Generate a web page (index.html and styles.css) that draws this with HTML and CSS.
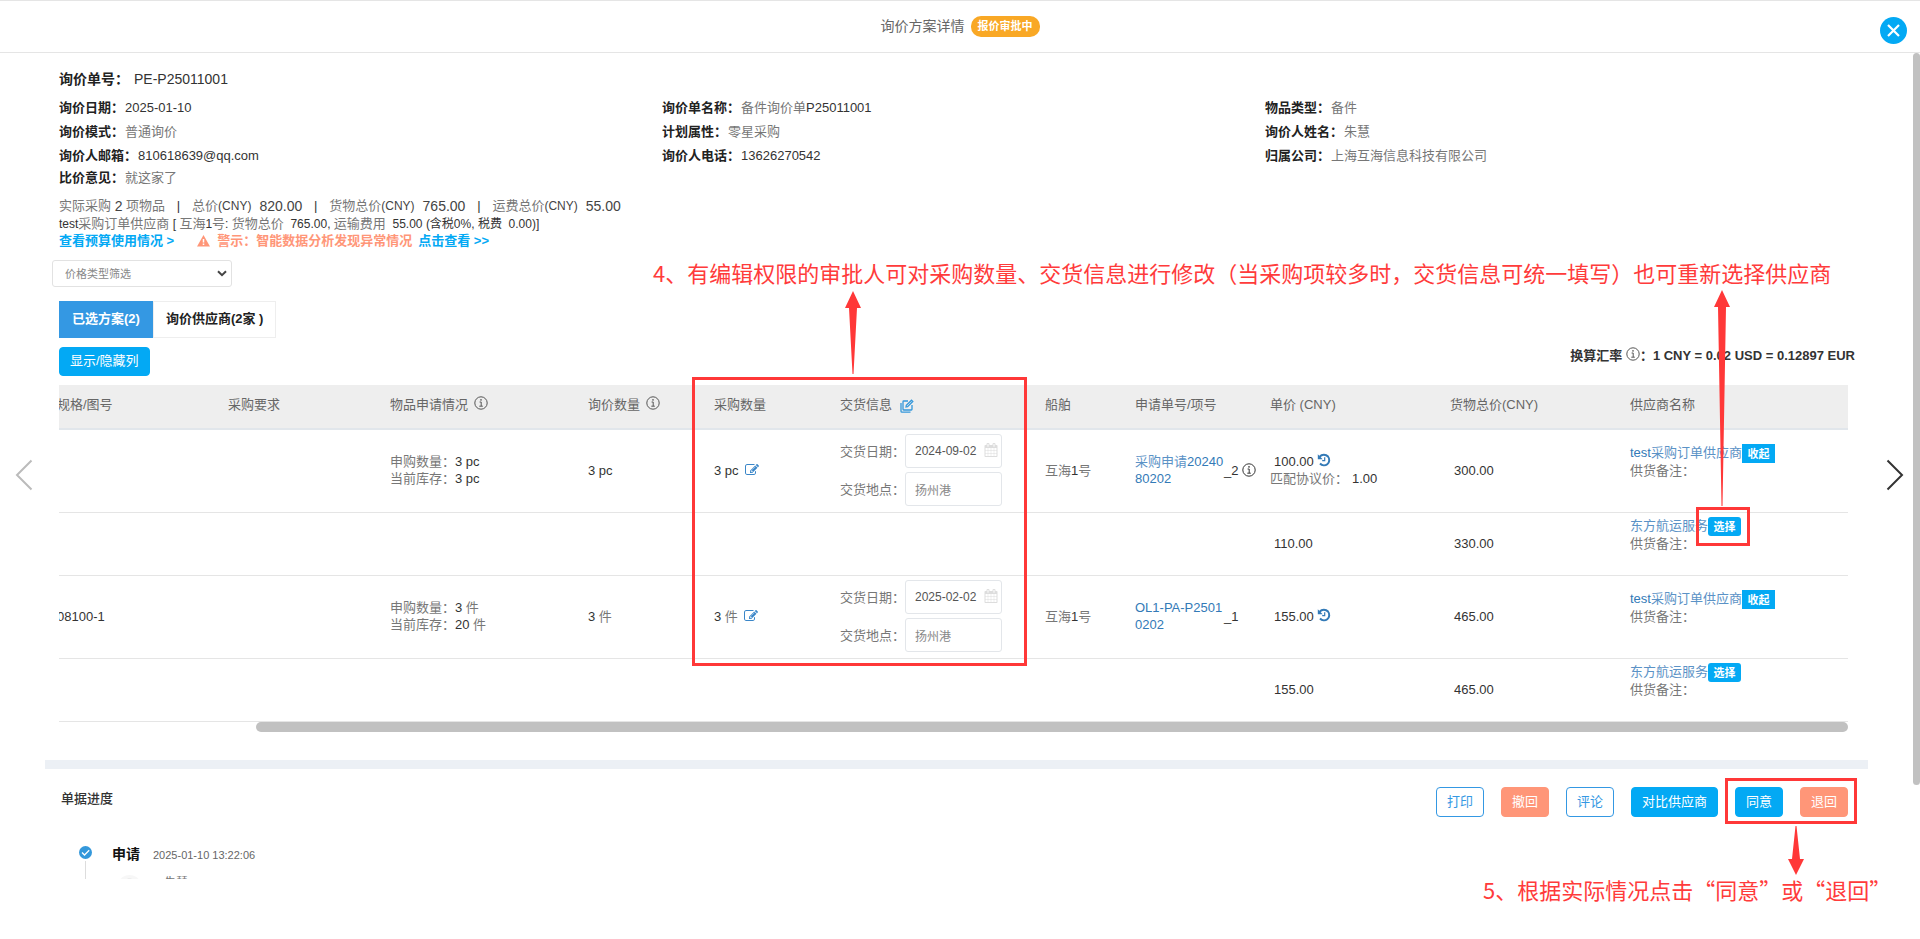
FILE: index.html
```html
<!DOCTYPE html>
<html lang="zh-CN">
<head>
<meta charset="utf-8">
<title>询价方案详情</title>
<link rel="stylesheet" href="styles.css">
</head>
<body>
<svg class="sprite" aria-hidden="true">
  <symbol id="i-info" viewBox="0 0 14 14"><g fill="none" stroke="currentColor"><circle cx="7" cy="7" r="6.2"/><path d="M5.6 6H7.2V10M5.3 10.2H8.8" stroke-width="1"/></g><circle cx="7" cy="3.9" r=".8" fill="currentColor"/></symbol>
  <symbol id="i-edit" viewBox="0 0 1792 1792"><path fill="currentColor" d="M888 1184l116-116-152-152-116 116v56h96v96h56zm440-720q-16-16-33 1l-350 350q-17 17-1 33t33-1l350-350q17-17 1-33zm80 594v190q0 119-84.5 203.5t-203.5 84.5h-832q-119 0-203.5-84.5t-84.5-203.5v-832q0-119 84.5-203.5t203.5-84.5h832q63 0 117 25 15 7 18 23 3 17-9 29l-49 49q-14 14-32 8-23-6-45-6h-832q-66 0-113 47t-47 113v832q0 66 47 113t113 47h832q66 0 113-47t47-113v-126q0-13 9-22l64-64q15-15 35-7t20 29zm-96-738l288 288-672 672h-288v-288zm444 132l-92 92-288-288 92-92q28-28 68-28t68 28l152 152q28 28 28 68t-28 68z"/></symbol>
  <symbol id="i-cal" viewBox="0 0 1792 1792"><path fill="currentColor" d="M192 1664h288v-288h-288v288zm352 0h320v-288h-320v288zm-352-352h288v-320h-288v320zm352 0h320v-320h-320v320zm-352-384h288v-288h-288v288zm736 736h320v-288h-320v288zm-384-736h320v-288h-320v288zm768 736h288v-288h-288v288zm-384-352h320v-320h-320v320zm-352-864v-288q0-13-9.5-22.5t-22.5-9.5h-64q-13 0-22.5 9.5t-9.5 22.5v288q0 13 9.5 22.5t22.5 9.5h64q13 0 22.5-9.5t9.5-22.5zm736 864h288v-320h-288v320zm-384-384h320v-288h-320v288zm384 0h288v-288h-288v288zm32-480v-288q0-13-9.5-22.5t-22.5-9.5h-64q-13 0-22.5 9.5t-9.5 22.5v288q0 13 9.5 22.5t22.5 9.5h64q13 0 22.5-9.5t9.5-22.5zm384-64v1280q0 52-38 90t-90 38h-1408q-52 0-90-38t-38-90v-1280q0-52 38-90t90-38h128v-96q0-66 47-113t113-47h64q66 0 113 47t47 113v96h384v-96q0-66 47-113t113-47h64q66 0 113 47t47 113v96h128q52 0 90 38t38 90z"/></symbol>
  <symbol id="i-history" viewBox="0 0 14 14"><path fill="none" stroke="currentColor" stroke-width="2" d="M2.500 3.800C5 .8 9 1.200 11 3.500C13 6 12.500 9.500 10.300 11.200C8.200 12.800 5 12.600 3 10.500"/><path fill="currentColor" d="M.8 1.300V6.200H5.700z"/><path fill="none" stroke="currentColor" stroke-width="1.200" d="M7.700 4.200V7.600H5.200"/></symbol>
</svg>

<div class="modal">
  <header class="modal-head">
    <h1 class="modal-title">询价方案详情</h1>
    <span class="badge">报价审批中</span>
    <button class="close" type="button" aria-label="关闭"><svg width="13" height="13" viewBox="0 0 13 13"><path d="M1 1L12 12M12 1L1 12" stroke="#fff" stroke-width="2.200"/></svg></button>
  </header>

  <main class="modal-body">
    <section class="content">
      <p class="number-line"><b>询价单号：</b><span class="dark">PE-P25011001</span></p>
      <div class="info-grid">
        <p><b>询价日期：</b><span class="dark">2025-01-10</span></p>
        <p><b>询价单名称：</b><span>备件询价单<i class="dark">P25011001</i></span></p>
        <p><b>物品类型：</b><span>备件</span></p>
        <p><b>询价模式：</b><span>普通询价</span></p>
        <p><b>计划属性：</b><span>零星采购</span></p>
        <p><b>询价人姓名：</b><span>朱慧</span></p>
        <p><b>询价人邮箱：</b><span class="dark">810618639@qq.com</span></p>
        <p><b>询价人电话：</b><span class="dark">13626270542</span></p>
        <p><b>归属公司：</b><span>上海互海信息科技有限公司</span></p>
      </div>
      <p class="opinion"><b>比价意见：</b><span>就这家了</span></p>

      <p class="totals">实际采购&nbsp;<span class="num">2</span>&nbsp;项物品<span class="sep">|</span>总价<span class="cny">(CNY)</span><span class="amount">820.00</span><span class="sep">|</span>货物总价<span class="cny">(CNY)</span><span class="amount">765.00</span><span class="sep">|</span>运费总价<span class="cny">(CNY)</span><span class="amount">55.00</span></p>
      <p class="breakdown"><i>test</i>采购订单供应商<i> [ </i>互海<i>1</i>号<i>: </i>货物总价<i>&nbsp; 765.00, </i>运输费用<i>&nbsp; 55.00 (含税0%, 税费&nbsp; 0.00)]</i></p>
      <p class="notices">
        <a href="#budget">查看预算使用情况 &gt;</a>
        <span class="warn"><svg width="13" height="12" viewBox="0 0 13 12"><path d="M6.500 0L13 11.500H0z" fill="#ff9678"/><path d="M6.500 4V7.500M6.500 8.500V10" stroke="#fff" stroke-width="1.500"/></svg>警示：智能数据分析发现异常情况</span>
        <a class="view" href="#alert">点击查看 &gt;&gt;</a>
      </p>

      <div class="filter">
        <select aria-label="价格类型筛选"><option>价格类型筛选</option></select>
        <svg width="10" height="7" viewBox="0 0 10 7"><path d="M1 1.200L5 5.200L9 1.200" fill="none" stroke="#444" stroke-width="2"/></svg>
      </div>

      <div class="tabs">
        <button class="tab active" type="button">已选方案(2)</button>
        <button class="tab" type="button">询价供应商(2家 )</button>
      </div>

      <div class="toolbar">
        <button class="btn primary toggle" type="button">显示/隐藏列</button>
        <p class="rate">换算汇率 <svg class="info" width="14" height="14"><use href="#i-info"/></svg>：<span>1 CNY = 0.02 USD = 0.12897 EUR</span></p>
      </div>

      <div class="table-wrap">
        <div class="table-view">
          <table class="items">
            <colgroup><col class="c1"><col class="c2"><col class="c3"><col class="c4"><col class="c5"><col class="c6"><col class="c7"><col class="c8"><col class="c9"><col class="c10"><col class="c11"></colgroup>
            <thead>
              <tr>
                <th>规格/图号</th><th>采购要求</th>
                <th>物品申请情况 <svg class="info" width="14" height="14"><use href="#i-info"/></svg></th>
                <th>询价数量 <svg class="info" width="14" height="14"><use href="#i-info"/></svg></th>
                <th>采购数量</th>
                <th>交货信息 <svg class="multi" width="14" height="14" viewBox="0 0 14 14"><g fill="none" stroke="#3498db" stroke-width="1.300"><path d="M8 2H3.700Q3 2 3 2.700V10.300Q3 11 3.700 11H11.300Q12 11 12 10.300V6"/><path d="M1 4V12.200Q1 13.200 2 13.200H10.500"/><path d="M6 8L6.300 6.300L11.500 1.200L12.800 2.500L7.600 7.700z"/></g></svg></th>
                <th>船舶</th><th>申请单号/项号</th><th>单价 (CNY)</th><th>货物总价(CNY)</th><th>供应商名称</th>
              </tr>
            </thead>
            <tbody>
              <tr class="main">
                <td></td><td></td>
                <td>申购数量：<i>3 pc</i><br>当前库存：<i>3 pc</i></td>
                <td><i>3 pc</i></td>
                <td><i>3 pc</i> <svg class="edit" width="14" height="14"><use href="#i-edit"/></svg></td>
                <td>
                  <div class="deliver"><label for="d1">交货日期：</label><span class="date"><input id="d1" type="text" value="2024-09-02"><svg width="14" height="14"><use href="#i-cal"/></svg></span></div>
                  <div class="deliver"><label for="p1">交货地点：</label><input class="place" id="p1" type="text" value="扬州港"></div>
                </td>
                <td>互海<i>1</i>号</td>
                <td><div class="req"><a href="#r1">采购申请<i>2024080202</i></a><i>_2</i><svg class="info" width="14" height="14"><use href="#i-info"/></svg></div></td>
                <td><i class="price">100.00</i> <svg class="hist" width="14" height="14"><use href="#i-history"/></svg><br>匹配协议价：<i class="price">1.00</i></td>
                <td><i class="price">300.00</i></td>
                <td class="supplier"><div><a href="#s1"><i>test</i>采购订单供应商</a><button class="tag" type="button">收起</button></div>供货备注：</td>
              </tr>
              <tr>
                <td></td><td></td><td></td><td></td><td></td><td></td><td></td><td></td>
                <td><i class="price">110.00</i></td>
                <td><i class="price">330.00</i></td>
                <td class="supplier"><div><a href="#s2">东方航运服务</a><button class="tag round" type="button">选择</button></div>供货备注：</td>
              </tr>
              <tr class="main">
                <td><i>08100-1</i></td><td></td>
                <td>申购数量：<i>3 </i>件<br>当前库存：<i>20 </i>件</td>
                <td><i>3 </i>件</td>
                <td><i>3 </i>件 <svg class="edit" width="14" height="14"><use href="#i-edit"/></svg></td>
                <td>
                  <div class="deliver"><label for="d2">交货日期：</label><span class="date"><input id="d2" type="text" value="2025-02-02"><svg width="14" height="14"><use href="#i-cal"/></svg></span></div>
                  <div class="deliver"><label for="p2">交货地点：</label><input class="place" id="p2" type="text" value="扬州港"></div>
                </td>
                <td>互海<i>1</i>号</td>
                <td><div class="req"><a href="#r2"><i>OL1-PA-P25010202</i></a><i>_1</i></div></td>
                <td><i class="price">155.00</i> <svg class="hist" width="14" height="14"><use href="#i-history"/></svg></td>
                <td><i class="price">465.00</i></td>
                <td class="supplier"><div><a href="#s3"><i>test</i>采购订单供应商</a><button class="tag" type="button">收起</button></div>供货备注：</td>
              </tr>
              <tr>
                <td></td><td></td><td></td><td></td><td></td><td></td><td></td><td></td>
                <td><i class="price">155.00</i></td>
                <td><i class="price">465.00</i></td>
                <td class="supplier"><div><a href="#s4">东方航运服务</a><button class="tag round" type="button">选择</button></div>供货备注：</td>
              </tr>
            </tbody>
          </table>
        </div>
        <div class="h-track"><div class="h-thumb"></div></div>
      </div>
    </section>

    <div class="band"></div>

    <section class="progress">
      <div class="progress-head">
        <h2>单据进度</h2>
        <div class="actions">
          <button class="btn outline" type="button">打印</button>
          <button class="btn danger" type="button">撤回</button>
          <button class="btn outline" type="button">评论</button>
          <button class="btn primary" type="button">对比供应商</button>
          <button class="btn primary" type="button">同意</button>
          <button class="btn danger" type="button">退回</button>
        </div>
      </div>
      <div class="timeline">
        <div class="marker">
          <svg width="13" height="13" viewBox="0 0 13 13"><circle cx="6.500" cy="6.500" r="6.500" fill="#3498db"/><path d="M3 6.500L5.500 9L10.200 4.300" fill="none" stroke="#fff" stroke-width="1.300"/></svg>
          <span class="line"></span>
        </div>
        <div>
          <p class="step"><b>申请</b><time>2025-01-10 13:22:06</time></p>
          <p class="person"><span class="avatar"></span>朱慧</p>
        </div>
      </div>
    </section>
    <div class="v-thumb"></div>
  </main>

  <button class="nav prev" type="button" aria-label="上一个"><svg width="18" height="32" viewBox="0 0 18 32"><path d="M16.500 1.500L2 16L16.500 30.500" fill="none" stroke="#bbb" stroke-width="2"/></svg></button>
  <button class="nav next" type="button" aria-label="下一个"><svg width="18" height="32" viewBox="0 0 18 32"><path d="M1.500 1.500L16 16L1.500 30.500" fill="none" stroke="#333" stroke-width="2"/></svg></button>
</div>

<div class="notes">
  <p class="note note-4">4、有编辑权限的审批人可对采购数量、交货信息进行修改（当采购项较多时，交货信息可统一填写）也可重新选择供应商</p>
  <p class="note note-5">5、根据实际情况点击“同意”或“退回”</p>
  <div class="frame frame-delivery"></div>
  <div class="frame frame-select"></div>
  <div class="frame frame-actions"></div>
  <svg class="arrow arrow-delivery" width="16" height="83" viewBox="0 0 16 83"><path d="M8 0L16 17H12L8.500 83H7.500L4 17H0z"/></svg>
  <svg class="arrow arrow-select" width="16" height="216" viewBox="0 0 16 216"><path d="M8 0L16 17H12L8.500 216H7.500L4 17H0z"/></svg>
  <svg class="arrow arrow-actions" width="16" height="49" viewBox="0 0 16 49"><path d="M8 49L0 33H4L7.500 0H8.500L12 33H16z"/></svg>
</div>
</body>
</html>
```

FILE: styles.css
```css
* { box-sizing: border-box; }
html, body { height: 100%; }
body {
  margin: 0;
  position: relative;
  overflow: hidden;
  background: #fff;
  color: #777;
  font: 13px/17px "Liberation Sans", "Noto Sans CJK SC", sans-serif;
}
p, h1, h2 { margin: 0; }
i { font-style: normal; color: #333; }
b { color: #222; }
a { color: #5b92c6; text-decoration: none; }
a i { color: #337ab7; }
button, input, select { font-family: inherit; }
button { padding: 0; border: 0; cursor: pointer; }
.sprite { position: absolute; width: 0; height: 0; }
.dark { color: #333; }

.modal { height: 100%; display: flex; flex-direction: column; padding-bottom: 60px; }
.modal-head {
  position: relative;
  flex: none;
  display: flex;
  justify-content: center;
  align-items: center;
  gap: 6px;
  height: 53px;
  border-top: 1px solid #e5e5e5;
  border-bottom: 1px solid #e5e5e5;
}
.modal-title { font-size: 14px; font-weight: 400; color: #666; }
.badge {
  height: 21px;
  padding: 0 7px;
  border-radius: 10px;
  background: #f9a825;
  color: #fff;
  font-size: 11px;
  font-weight: 700;
  line-height: 20px;
}
.close {
  position: absolute;
  top: 16px;
  right: 13px;
  display: flex;
  align-items: center;
  justify-content: center;
  width: 27px;
  height: 27px;
  border-radius: 50%;
  background: #03a9f4;
}
.modal-body { position: relative; flex: 1; min-height: 0; overflow: hidden; }
.v-thumb { position: absolute; top: 0; right: 0; width: 7px; height: 732px; border-radius: 4px; background: #c1c1c1; }

.content { padding: 12px 65px 0 59px; }
.number-line { font-size: 14px; line-height: 28px; margin-bottom: 3px; }
.number-line span { margin-left: 5px; }
.info-grid { display: grid; grid-template-columns: repeat(3, 1fr); margin-right: -13px; line-height: 24px; }
.info-grid span, .opinion span { margin-left: 1px; }
.opinion { line-height: 20px; margin-bottom: 8px; }

.totals { display: flex; line-height: 20px; }
.totals .num, .totals .amount { font-size: 14px; color: #444; }
.totals .cny { font-size: 12px; color: #444; }
.totals .amount { margin-left: 8px; }
.totals .sep { width: 27px; text-align: center; color: #333; }
.breakdown { height: 16px; line-height: 16px; }
.breakdown i { font-size: 12px; }
.notices { display: flex; height: 17px; font-weight: 700; }
.notices a { color: #03a9f4; }
.warn { display: flex; align-items: center; gap: 7px; margin-left: 23px; color: #ff9678; }
.notices .view { margin-left: 6px; }

.filter { position: relative; width: 180px; margin: 11px 0 14px -7px; }
.filter select {
  display: block;
  width: 100%;
  height: 27px;
  padding: 0 12px;
  appearance: none;
  border: 1px solid #e2e2e2;
  border-radius: 3px;
  background: #fff;
  color: #888;
  font-size: 11px;
}
.filter svg { position: absolute; right: 5px; top: 10px; }

.tabs { display: flex; height: 37px; }
.tab {
  padding: 0 12px 4px;
  border: 1px solid #eee;
  background: #fff;
  color: #222;
  font-size: 13px;
  font-weight: 700;
}
.tab.active { border-color: #3498e3; background: #3498e3; color: #fff; }

.toolbar { display: flex; justify-content: space-between; align-items: flex-start; margin: 9px 0; }
.btn { height: 30px; padding: 0 10px 4px; border: 1px solid; border-radius: 4px; background: #fff; font-size: 13px; }
.primary { border-color: #03a9f4; background: #03a9f4; color: #fff; }
.danger { border-color: #ff9678; background: #ff9678; color: #fff; }
.outline { border-color: #3498e3; color: #3498e3; }
.toggle { height: 29px; }
.rate { height: 17px; color: #333; font-weight: 700; }
.info { vertical-align: -1px; color: #555; }
th .info { margin-left: 2px; }

.table-wrap { margin-right: 7px; }
.table-view { overflow: hidden; }
.items { width: calc(100% + 12px); margin-left: -12px; table-layout: fixed; border-spacing: 0; }
.c1 { width: 171px; } .c2 { width: 162px; } .c3 { width: 198px; } .c4 { width: 126px; }
.c5 { width: 126px; } .c6 { width: 205px; } .c7 { width: 90px; } .c8 { width: 135px; }
.c9, .c10 { width: 180px; }
.items th {
  height: 45px;
  padding: 0 0 4px 10px;
  border-bottom: 2px solid #e1e6eb;
  background: #eee;
  color: #666;
  font-weight: 400;
  text-align: left;
  white-space: nowrap;
}
.items td { height: 63px; padding: 0 0 2px 10px; border-bottom: 1px solid #e5e5e5; vertical-align: middle; white-space: nowrap; }
.items .main td { height: 83px; }
.items .supplier { vertical-align: top; padding-top: 4px; }
.items .main .supplier { padding-top: 14px; }
.supplier div { display: flex; height: 18px; }
.multi { margin-left: 4px; vertical-align: -4px; }
.edit { margin-left: 3px; vertical-align: -2px; color: #3a86c8; }
.hist { vertical-align: -1px; color: #337ab7; }
.price { margin-left: 4px; }
.deliver { display: flex; align-items: center; }
.deliver + .deliver { margin-top: 4px; }
.deliver input { width: 97px; height: 34px; padding: 0 9px; border: 1px solid #e3e6ea; border-radius: 3px; background: #fff; color: #555; font-size: 12px; }
.deliver .place { color: #888; }
.deliver label { width: 65px; }
.date { position: relative; }
.date svg { position: absolute; right: 4px; top: 9px; color: #ddd; }
.req { display: flex; align-items: center; white-space: normal; }
.req a { flex: none; width: 89px; word-break: break-all; }
.req .info { margin-left: 4px; color: #333; }
.tag { flex: none; width: 33px; height: 19px; background: #03a9f4; color: #fff; font-size: 11px; font-weight: 700; line-height: 18px; }
.tag.round { border-radius: 3px; }
.h-track { height: 10px; display: flex; justify-content: flex-end; }
.h-thumb { width: 89%; border-radius: 5px; background: #c1c1c1; }

.band { height: 9px; margin: 28px 52px 0 45px; background: #ecf0f5; }
.progress { padding: 18px 72px 0 61px; }
.progress-head { display: flex; justify-content: space-between; align-items: flex-start; }
.progress-head h2 { color: #333; font-size: 13px; font-weight: 500; line-height: 24px; }
.actions { display: flex; gap: 17px; }
.timeline { display: flex; gap: 20px; padding: 29px 0 0 18px; }
.marker { display: flex; flex-direction: column; align-items: center; gap: 2px; }
.marker .line { width: 1px; height: 60px; background: #ddd; }
.step b { color: #111; font-size: 14px; }
.step time { margin-left: 13px; color: #666; font-size: 11px; }
.person { display: flex; gap: 22px; margin: 11px 0 0 5px; font-size: 12px; }
.avatar { width: 25px; height: 25px; border-radius: 50%; background: radial-gradient(circle at 50% 40%, #ccc 5px, #f7f7f7 7px); }

.nav { position: absolute; top: 459px; width: 18px; height: 32px; background: none; }
.prev { left: 15px; }
.next { right: 16px; }

/* Walkthrough annotations drawn over the dialog */
.notes { position: absolute; inset: 0; pointer-events: none; }
.note { position: absolute; color: #ff3b3b; font: 22px/28px "Noto Sans CJK SC", sans-serif; white-space: nowrap; }
.note-4 { left: 653px; top: 258px; }
.note-5 { left: 1483px; top: 875px; }
.frame { position: absolute; border: 3px solid #ff3838; }
.frame-delivery { left: 692px; top: 377px; width: 335px; height: 289px; }
.frame-select { left: 1696px; top: 507px; width: 54px; height: 39px; }
.frame-actions { left: 1725px; top: 778px; width: 132px; height: 46px; }
.arrow { position: absolute; fill: #ff3838; }
.arrow-delivery { left: 845px; top: 291px; }
.arrow-select { left: 1714px; top: 290px; }
.arrow-actions { left: 1788px; top: 826px; }
```
